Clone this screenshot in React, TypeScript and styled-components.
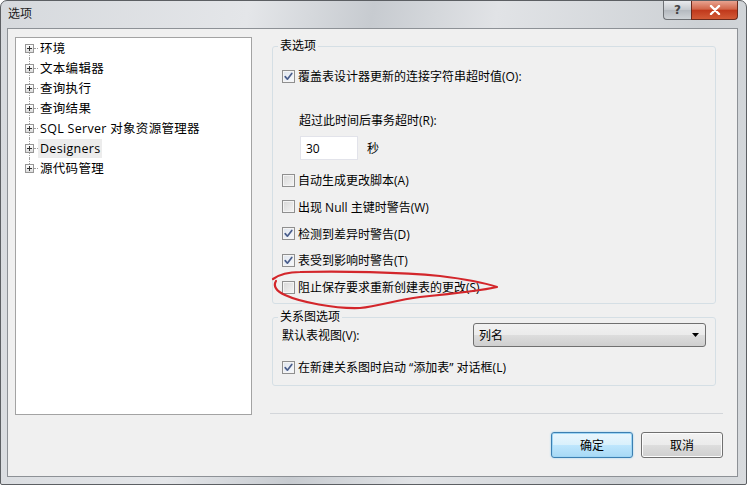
import styled, { createGlobalStyle } from "styled-components";

const GlobalStyle = createGlobalStyle`
  body {
    margin: 0;
    background: #ffffff;
    font-family: "Open Sans", "Noto Sans CJK SC", sans-serif;
    font-size: 12px;
    color: #000;
  }
`;

const treeItems = [
  "环境",
  "文本编辑器",
  "查询执行",
  "查询结果",
  "SQL Server 对象资源管理器",
  "Designers",
  "源代码管理",
];

const tableOptions = [
  { label: "自动生成更改脚本(A)", checked: false },
  { label: "出现 Null 主键时警告(W)", checked: false },
  { label: "检测到差异时警告(D)", checked: true },
  { label: "表受到影响时警告(T)", checked: true },
  { label: "阻止保存要求重新创建表的更改(S)", checked: false },
];

const CheckBox = ({ checked }: { checked: boolean }) => (
  <Box $checked={checked}>
    {checked && (
      <svg width="11" height="11" viewBox="0 0 11 11">
        <path
          d="M2.2 5.6 L4.4 8.2 L8.8 2.4"
          fill="none"
          stroke="#4a5e8c"
          strokeWidth="1.7"
          strokeLinecap="round"
          strokeLinejoin="round"
        />
      </svg>
    )}
  </Box>
);

export default function App() {
  return (
    <>
      <GlobalStyle />
      <Window>
        <TitleBar>
          <Caption>选项</Caption>
          <Controls>
            <HelpButton>?</HelpButton>
            <CloseButton>
              <svg width="12" height="10" viewBox="0 0 12 10">
                <path
                  d="M2 1 L10 9 M10 1 L2 9"
                  stroke="#fff"
                  strokeWidth="2.4"
                  strokeLinecap="round"
                />
              </svg>
            </CloseButton>
          </Controls>
        </TitleBar>
        <Client>
          <Main>
            <Tree>
              {treeItems.map((item, i) => (
                <TreeRow key={item}>
                  <Gutter $first={i === 0} $last={i === treeItems.length - 1}>
                    <Expander>
                      <svg width="9" height="9" viewBox="0 0 9 9">
                        <path d="M2 4.5 H7 M4.5 2 V7" stroke="#333" strokeWidth="1" />
                      </svg>
                    </Expander>
                  </Gutter>
                  <TreeLabel $hover={item === "Designers"}>{item}</TreeLabel>
                </TreeRow>
              ))}
            </Tree>
            <Side>
              <TableGroup>
                <Legend>表选项</Legend>
                <OverrideRow>
                  <CheckBox checked />
                  <span>覆盖表设计器更新的连接字符串超时值(O):</span>
                </OverrideRow>
                <TimeoutLabel>超过此时间后事务超时(R):</TimeoutLabel>
                <TimeoutLine>
                  <TextInput>30</TextInput>
                  <span>秒</span>
                </TimeoutLine>
                <OptionList>
                  {tableOptions.map((o) => (
                    <CheckRow key={o.label}>
                      <CheckBox checked={o.checked} />
                      <span>{o.label}</span>
                    </CheckRow>
                  ))}
                </OptionList>
              </TableGroup>
              <DiagramGroup>
                <Legend>关系图选项</Legend>
                <SelectLine>
                  <span>默认表视图(V):</span>
                  <Combo>
                    <span>列名</span>
                    <svg width="7" height="4" viewBox="0 0 7 4">
                      <path d="M0 0 H7 L3.5 4 Z" fill="#000" />
                    </svg>
                  </Combo>
                </SelectLine>
                <DiagramCheck>
                  <CheckBox checked />
                  <span>在新建关系图时启动 “添加表” 对话框(L)</span>
                </DiagramCheck>
              </DiagramGroup>
              <Separator />
            </Side>
          </Main>
          <ButtonRow>
            <Button $primary>确定</Button>
            <Button>取消</Button>
          </ButtonRow>
        </Client>
        <Annotation width="747" height="486" viewBox="0 0 747 486">
          <path
            d="M273 279 C 280 274, 290 272, 300 272 C 340 271, 400 272, 440 276 C 465 279, 485 283, 497 287 C 480 291, 450 294, 420 297 C 395 300, 380 306, 360 308 C 335 309, 300 302, 285 295 C 276 291, 273 286, 276 281"
            fill="none"
            stroke="#d3262b"
            strokeWidth="2.2"
            strokeLinecap="round"
            strokeLinejoin="round"
          />
        </Annotation>
      </Window>
    </>
  );
}

const Window = styled.div`
  position: relative;
  width: 745px;
  height: 483px;
  display: flex;
  flex-direction: column;
  border: 1px solid #5c5f63;
  border-radius: 7px 7px 2px 2px;
  background: linear-gradient(100deg, #d6d9dd 0%, #e4e6e9 30%, #c7cbd0 45%, #e1e3e6 60%, #cdd1d5 85%, #d8dbde 100%);
  overflow: hidden;
`;

const TitleBar = styled.div`
  height: 27px;
  display: flex;
  align-items: flex-start;
  padding-left: 7px;
`;

const Caption = styled.span`
  line-height: 26px;
  font-size: 12px;
  color: #1a1a1a;
`;

const Controls = styled.div`
  margin-left: auto;
  margin-right: 8px;
  display: flex;
`;

const HelpButton = styled.div`
  width: 27px;
  height: 18px;
  display: flex;
  align-items: center;
  justify-content: center;
  border: 1px solid #6e7175;
  border-top: none;
  border-right: none;
  border-radius: 0 0 0 4px;
  background: linear-gradient(#e9ebee, #c4c8cd 50%, #b4b9bf 51%, #cfd3d7);
  color: #444;
  font-family: "DejaVu Sans", sans-serif;
  font-size: 12px;
  font-weight: bold;
`;

const CloseButton = styled.div`
  width: 45px;
  height: 18px;
  display: flex;
  align-items: center;
  justify-content: center;
  border: 1px solid #6a2a1c;
  border-top: none;
  border-radius: 0 0 4px 0;
  background: linear-gradient(#e8a390, #d2664a 45%, #c0391c 52%, #d25a36);
`;

const Client = styled.div`
  flex: 1;
  margin: 0 8px 7px 6px;
  padding: 8px 14px 18px 7px;
  display: flex;
  flex-direction: column;
  background: #f0f0f0;
  border: 1px solid #8d9196;
`;

const Main = styled.div`
  display: grid;
  grid-template-columns: 237px 1fr;
  column-gap: 18px;
  height: 378px;
`;

const Tree = styled.div`
  background: #fff;
  border: 1px solid #a3a3a3;
`;

const TreeRow = styled.div`
  height: 20px;
  display: flex;
  align-items: center;
  padding-left: 9px;
`;

const Gutter = styled.span<{ $first: boolean; $last: boolean }>`
  position: relative;
  width: 9px;
  height: 20px;
  display: flex;
  align-items: center;
  margin-right: 6px;

  &::before {
    content: "";
    position: absolute;
    left: 4px;
    top: ${(p) => (p.$first ? "10px" : "0")};
    bottom: ${(p) => (p.$last ? "10px" : "0")};
    border-left: 1px dotted #a0a0a0;
  }

  &::after {
    content: "";
    position: absolute;
    left: 9px;
    top: 10px;
    width: 4px;
    border-top: 1px dotted #a0a0a0;
  }
`;

const Expander = styled.span`
  position: relative;
  z-index: 1;
  width: 9px;
  height: 9px;
  box-sizing: border-box;
  border: 1px solid #969696;
  background: linear-gradient(#ffffff, #dcdcdc);

  svg {
    position: absolute;
    left: -1px;
    top: -1px;
  }
`;

const TreeLabel = styled.span<{ $hover: boolean }>`
  font-size: 12.5px;
  line-height: 19px;
  padding: 0 2px;
  margin-left: -2px;
  letter-spacing: 0.3px;
  background: ${(p) => (p.$hover ? "#ececec" : "transparent")};
`;

const Side = styled.div`
  display: flex;
  flex-direction: column;
`;

const Group = styled.fieldset`
  margin: 0 7px 0 2px;
  padding: 0 0 6px 9px;
  border: 1px solid #d5dfe5;
  border-radius: 3px;
  display: flex;
  flex-direction: column;
`;

const TableGroup = styled(Group)`
  margin-top: 1px;
`;

const DiagramGroup = styled(Group)`
  margin-top: 5px;
  padding-bottom: 8px;
`;

const Legend = styled.legend`
  padding: 0 2px;
  margin-left: -4px;
  line-height: 16px;
`;

const CheckRow = styled.div`
  height: 20px;
  display: flex;
  align-items: center;
  gap: 3px;
`;

const OverrideRow = styled(CheckRow)`
  margin-top: 12px;
`;

const Box = styled.span<{ $checked: boolean }>`
  width: 13px;
  height: 13px;
  box-sizing: border-box;
  border: 1px solid #8f8f8f;
  background: ${(p) =>
    p.$checked
      ? "linear-gradient(135deg, #dfe5ee, #f7f9fc)"
      : "linear-gradient(135deg, #d8d8d8, #f4f4f4)"};
  box-shadow: inset 0 0 0 1px #f4f4f4;
  display: flex;
  align-items: center;
  justify-content: center;
  flex-shrink: 0;
`;

const TimeoutLabel = styled.div`
  margin: 27px 0 0 17px;
  line-height: 16px;
`;

const TimeoutLine = styled.div`
  margin: 7px 0 0 18px;
  display: flex;
  align-items: center;
  gap: 9px;
`;

const TextInput = styled.div`
  width: 58px;
  height: 24px;
  box-sizing: border-box;
  padding-left: 5px;
  border: 1px solid #e2e3ea;
  background: #fff;
  display: flex;
  align-items: center;
`;

const OptionList = styled.div`
  margin-top: 10px;
  display: flex;
  flex-direction: column;
  gap: 6.8px;
`;

const SelectLine = styled.div`
  margin-top: -2px;
  padding-right: 9px;
  display: flex;
  align-items: center;
  justify-content: space-between;
`;

const Combo = styled.div`
  width: 233px;
  height: 24px;
  box-sizing: border-box;
  padding: 0 6px 0 5px;
  border: 1px solid #707070;
  border-radius: 3px;
  background: linear-gradient(#f2f2f2, #ebebeb 50%, #dddddd 51%, #cfcfcf);
  display: flex;
  align-items: center;
  justify-content: space-between;
`;

const DiagramCheck = styled(CheckRow)`
  margin-top: 10px;
`;

const Separator = styled.div`
  margin-top: auto;
  margin-bottom: 1px;
  border-top: 1px solid #d3d6da;
`;

const ButtonRow = styled.div`
  margin-top: 17px;
  display: flex;
  justify-content: flex-end;
  gap: 8px;
`;

const Button = styled.div<{ $primary?: boolean }>`
  width: 82px;
  height: 26px;
  box-sizing: border-box;
  display: flex;
  align-items: center;
  justify-content: center;
  border-radius: 3px;
  border: 1px solid ${(p) => (p.$primary ? "#3c7fb1" : "#707070")};
  background: ${(p) =>
    p.$primary
      ? "linear-gradient(#eaf6fd, #d9f0fc 50%, #bee6fd 51%, #a7d9f5)"
      : "linear-gradient(#f2f2f2, #ebebeb 50%, #dddddd 51%, #cfcfcf)"};
  box-shadow: ${(p) =>
    p.$primary ? "inset 0 0 0 1px #9fd6f5, 0 0 2px #8ecdf0" : "inset 0 0 0 1px #fcfcfc"};
`;

const Annotation = styled.svg`
  position: absolute;
  left: -1px;
  top: -1px;
  pointer-events: none;
`;
